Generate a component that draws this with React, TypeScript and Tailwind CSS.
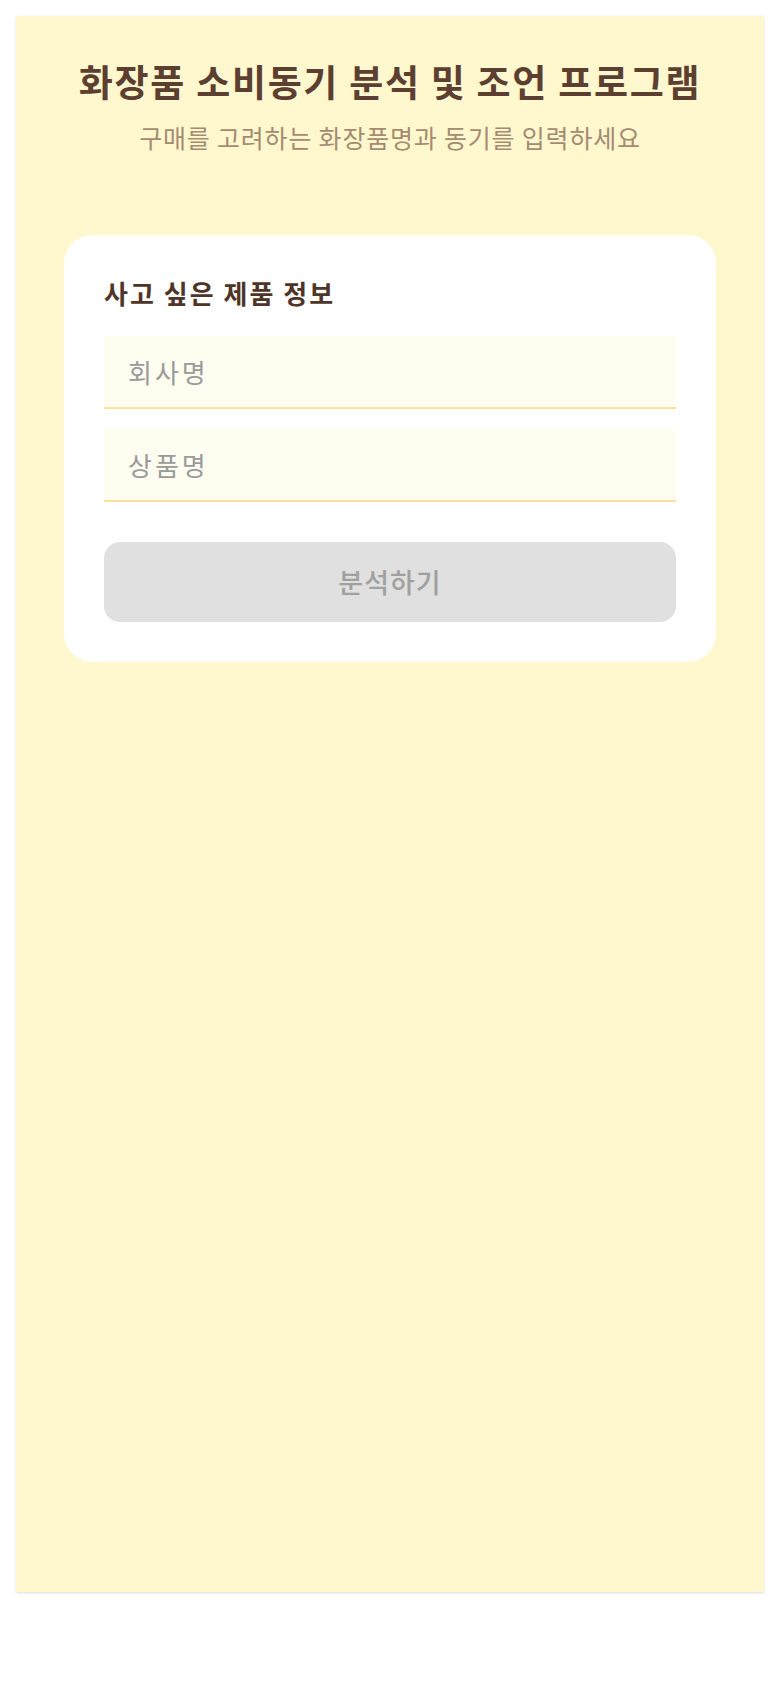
import React, { useState } from 'react';

const font = { fontFamily: '"Noto Sans CJK KR", "Noto Sans", sans-serif' };

export default function App() {
  const [company, setCompany] = useState('');
  const [product, setProduct] = useState('');
  const ready = company.trim() !== '' && product.trim() !== '';

  return (
    <div className="bg-white p-4" style={font}>
      <div className="h-[1576px] bg-[#fff8cf] px-12 pt-10 shadow-sm">
        {/* Header */}
        <div className="mb-[80px] text-center">
          <h1 className="text-[37px] font-bold leading-[51px] tracking-[1.7px] text-[#5d3f31]">
            화장품 소비동기 분석 및 조언 프로그램
          </h1>
          <p className="mt-3 text-[25px] leading-9 tracking-[0.8px] text-[#a68b6f]">
            구매를 고려하는 화장품명과 동기를 입력하세요
          </p>
        </div>

        {/* Card */}
        <div className="rounded-[28px] bg-white p-10">
          <h2 className="mb-[25px] text-[26px] font-bold leading-9 tracking-[2px] text-[#4e3528]">
            사고 싶은 제품 정보
          </h2>

          <div className="space-y-5">
            <input
              value={company}
              onChange={(e) => setCompany(e.target.value)}
              placeholder="회사명"
              className="block h-[73px] w-full border-b-2 border-[#fde19a] bg-[#fffdf0] px-6 text-[26px] tracking-[3px] text-[#4e3528] outline-none placeholder:text-[#9a9a9a]"
            />
            <input
              value={product}
              onChange={(e) => setProduct(e.target.value)}
              placeholder="상품명"
              className="block h-[73px] w-full border-b-2 border-[#fde19a] bg-[#fffdf0] px-6 text-[26px] tracking-[3px] text-[#4e3528] outline-none placeholder:text-[#9a9a9a]"
            />
          </div>

          <button
            disabled={!ready}
            className={
              ready
                ? 'mt-10 h-20 w-full rounded-2xl bg-[#f5c542] text-[27px] font-medium tracking-[1px] text-[#4e3528]'
                : 'mt-10 h-20 w-full rounded-2xl bg-[#e0e0e0] text-[27px] font-medium tracking-[1px] text-[#a0a0a0]'
            }
          >
            분석하기
          </button>
        </div>
      </div>
    </div>
  );
}
